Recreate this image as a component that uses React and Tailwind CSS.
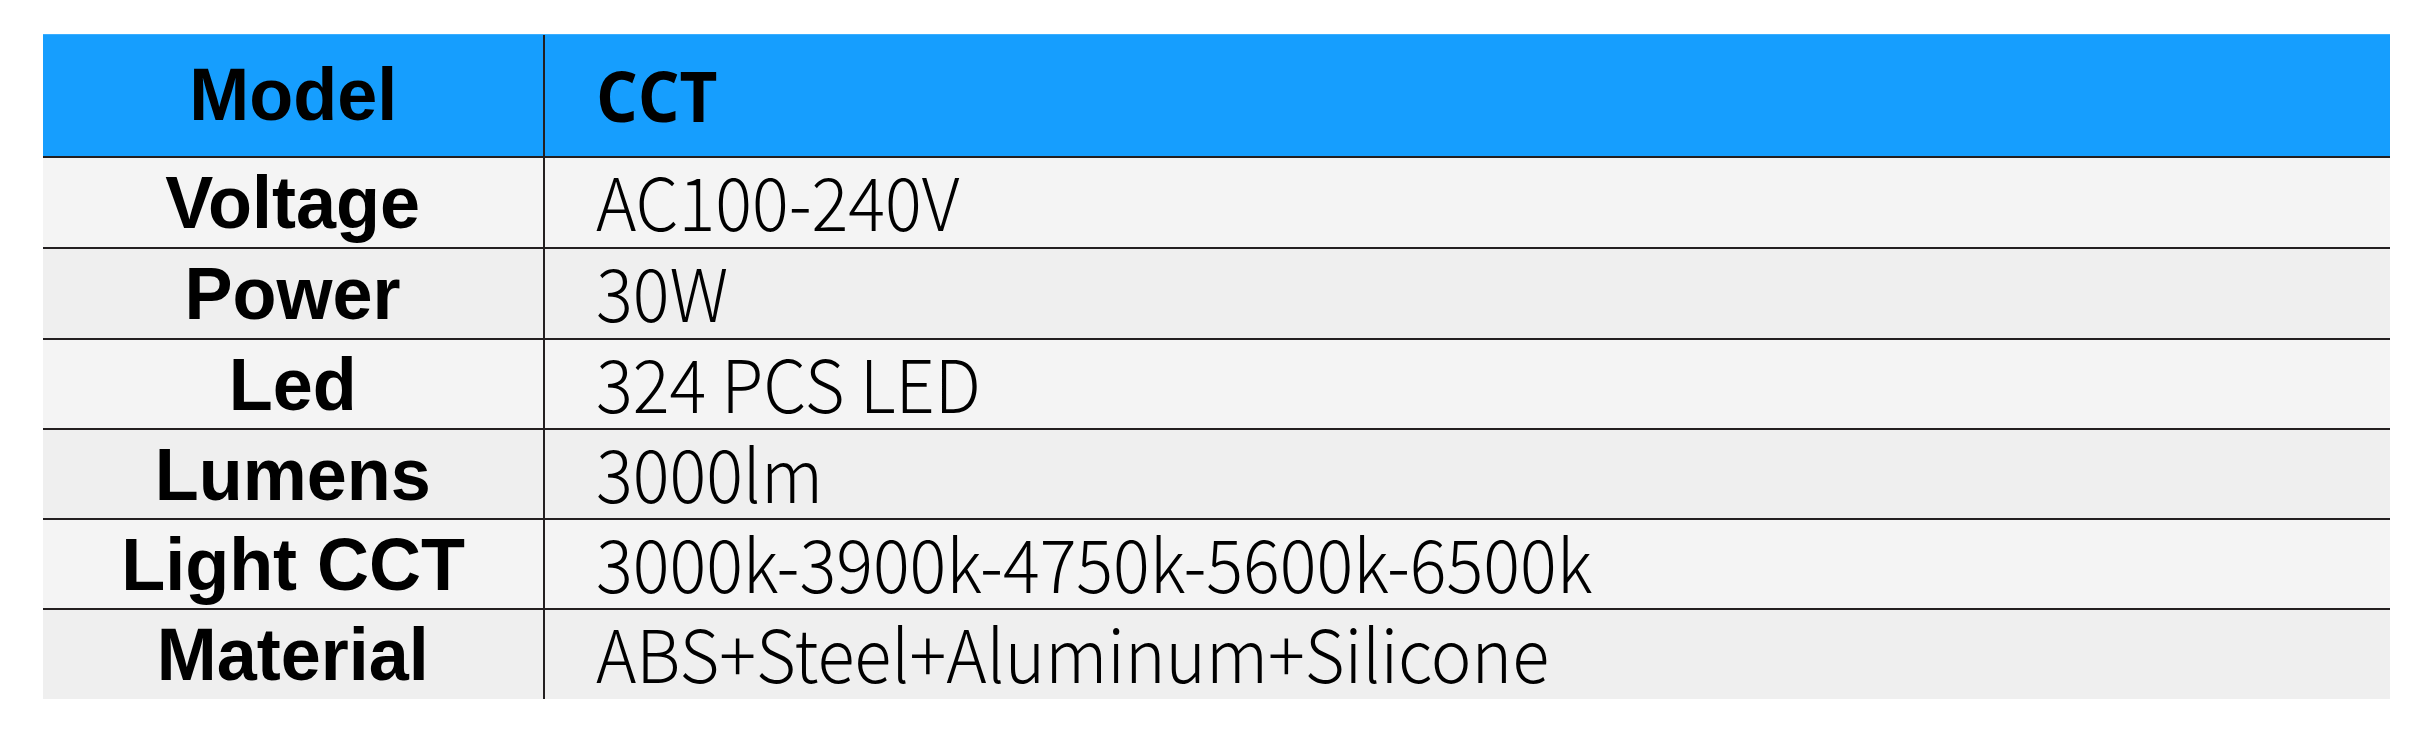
import React from 'react';

const rows = [
    { label: 'Voltage', value: 'AC100-240V', h: 'h-[91px]', bg: 'bg-[#f4f4f4]' },
    { label: 'Power', value: '30W', h: 'h-[91px]', bg: 'bg-[#efefef]' },
    { label: 'Led', value: '324 PCS LED', h: 'h-[90px]', bg: 'bg-[#f4f4f4]' },
    { label: 'Lumens', value: '3000lm', h: 'h-[90px]', bg: 'bg-[#efefef]' },
    { label: 'Light CCT', value: '3000k-3900k-4750k-5600k-6500k', h: 'h-[90px]', bg: 'bg-[#f4f4f4]' },
    { label: 'Material', value: 'ABS+Steel+Aluminum+Silicone', h: 'h-[91px]', bg: 'bg-[#efefef]' }
];

const labelFont = { fontFamily: '"Liberation Sans", Arial, sans-serif' };
const valueFont = { fontFamily: '"Noto Sans CJK SC", "Noto Sans", sans-serif' };

const App = () => {
    return (
        <div className="w-[2433px] h-[756px] bg-white pt-[34px] pl-[43px]">
            <div className="w-[2347px] flex flex-col">
                <div className="h-[122px] flex bg-[#169efe] border-t border-[#3aaeff]">
                    <div className="w-[502px] shrink-0 flex items-center justify-center border-r-2 border-[#231f20]">
                        <span style={labelFont} className="inline-block text-[75px] leading-none font-bold text-black scale-x-[0.96] -mt-[3px]">Model</span>
                    </div>
                    <div className="flex-1 flex items-center pl-[51px]">
                        <span style={{ fontFamily: '"Open Sans", sans-serif' }} className="inline-block text-[69px] leading-none font-bold text-black scale-x-[0.95] origin-left">CCT</span>
                    </div>
                </div>
                {rows.map((row) => (
                    <div key={row.label} className={`${row.h} ${row.bg} flex border-t-2 border-[#231f20]`}>
                        <div className="w-[502px] shrink-0 flex items-center justify-center border-r-2 border-[#231f20]">
                            <span style={labelFont} className="inline-block text-[75px] leading-none font-bold text-black scale-x-[0.96] whitespace-nowrap">{row.label}</span>
                        </div>
                        <div className="flex-1 flex items-center pl-[51px]">
                            <span style={valueFont} className="inline-block origin-left scale-x-[0.94] text-[73px] leading-none font-light text-black whitespace-nowrap -mt-[6px]">{row.value}</span>
                        </div>
                    </div>
                ))}
            </div>
        </div>
    );
};

export default App;
